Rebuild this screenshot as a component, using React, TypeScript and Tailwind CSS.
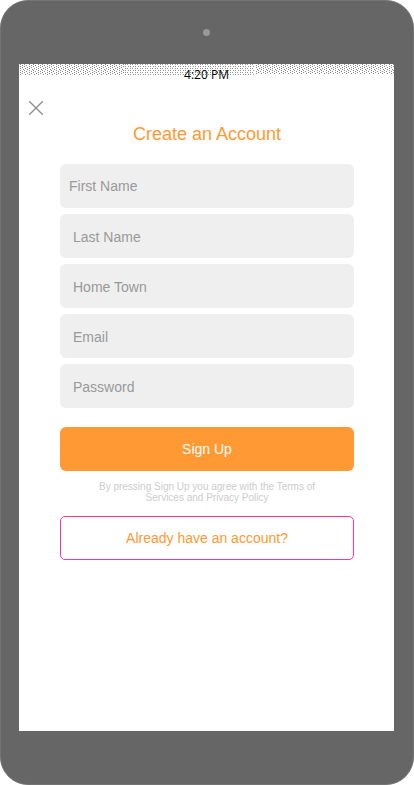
import React from 'react';

const fields = [
  { id: 'firstName', label: 'First Name', type: 'text', pad: 'pl-[9px]' },
  { id: 'lastName', label: 'Last Name', type: 'text', pad: 'pl-[13px] pt-0.5' },
  { id: 'homeTown', label: 'Home Town', type: 'text', pad: 'pl-[13px] pt-0.5' },
  { id: 'email', label: 'Email', type: 'email', pad: 'pl-[13px] pt-0.5' },
  { id: 'password', label: 'Password', type: 'password', pad: 'pl-[13px] pt-0.5' },
];

function StatusBar() {
  return (
    <div className="relative h-5">
      <svg className="block h-[11px] w-full" shapeRendering="crispEdges" aria-hidden="true">
        <defs>
          {/* Denser speckle for the sides, lighter one behind the clock */}
          <pattern id="dots-side" width="9" height="6" patternUnits="userSpaceOnUse">
            <path
              d="M1 0h1v1h-1zM5 0h1v1h-1zM3 1h1v1h-1zM7 1h1v1h-1zM1 2h1v1h-1zM5 2h1v1h-1zM8 3h1v1h-1zM3 3h1v1h-1zM6 4h1v1h-1zM1 4h1v1h-1zM4 5h1v1h-1zM8 5h1v1h-1z"
              fill="#8a8a8a"
            />
          </pattern>
          <pattern id="dots-middle" width="5" height="4" patternUnits="userSpaceOnUse">
            <path d="M1 0h1v1h-1zM3 0h1v1h-1zM1 2h1v1h-1zM4 2h1v1h-1z" fill="#969696" />
          </pattern>
        </defs>
        <rect width="28%" height="100%" fill="url(#dots-side)" />
        <rect x="28%" width="35%" height="100%" fill="url(#dots-middle)" />
        <rect x="63%" width="37%" height="10" fill="url(#dots-side)" />
      </svg>
      <span className="absolute inset-x-0 top-0.5 text-center font-['Open_Sans',sans-serif] text-[12px] leading-[18px] text-black">
        4:20 PM
      </span>
    </div>
  );
}

export default function App() {
  const [values, setValues] = React.useState<Record<string, string>>({});

  return (
    <div className="min-h-screen bg-white font-['Liberation_Sans',Arial,sans-serif]">
      {/* Phone body */}
      <div className="flex min-h-screen flex-col rounded-[28px] border border-[#747474] bg-[#666666] pr-[19px] pb-[53px] pl-[18px]">
        <div className="flex h-[63px] items-center justify-center">
          <div className="h-[7px] w-[7px] rounded-full bg-[#999999]" />
        </div>

        {/* Screen */}
        <main className="flex flex-1 flex-col bg-white">
          <StatusBar />

          <div className="flex h-10 items-start px-2.5 pt-[17px]">
            <button type="button" aria-label="Close">
              <svg className="block" width="14" height="14" viewBox="0 0 14 14" fill="none" stroke="#8c8c8c" strokeWidth="1.3">
                <path d="M0.3 0.3L13.7 13.7M13.7 0.3L0.3 13.7" />
              </svg>
            </button>
          </div>

          <form className="flex flex-col pr-10 pl-[41px]" onSubmit={(e) => e.preventDefault()}>
            <h1 className="text-center text-[18px] leading-5 text-[#ff9933]">Create an Account</h1>

            <div className="mt-5 flex flex-col gap-1.5">
              {fields.map((field) => (
                <input
                  key={field.id}
                  id={field.id}
                  type={field.type}
                  aria-label={field.label}
                  placeholder={field.label}
                  value={values[field.id] ?? ''}
                  onChange={(e) => setValues({ ...values, [field.id]: e.target.value })}
                  className={`h-11 w-full rounded-md bg-[#efefef] pr-3 text-[14px] text-[#333333] outline-none placeholder:text-[#999999] ${field.pad}`}
                />
              ))}
            </div>

            <button type="submit" className="mt-[19px] h-11 w-full rounded-md bg-[#ff9933] text-[14px] text-white">
              Sign Up
            </button>

            <p className="mt-2.5 px-8 text-center text-[10px] leading-[11px] text-[#cccccc]">
              By pressing Sign Up you agree with the Terms of Services and Privacy Policy
            </p>

            <button
              type="button"
              className="mt-[13px] h-11 w-full rounded-[5px] border border-[#ff3399] bg-white text-[14px] text-[#ff9933]"
            >
              Already have an account?
            </button>
          </form>
        </main>
      </div>
    </div>
  );
}
